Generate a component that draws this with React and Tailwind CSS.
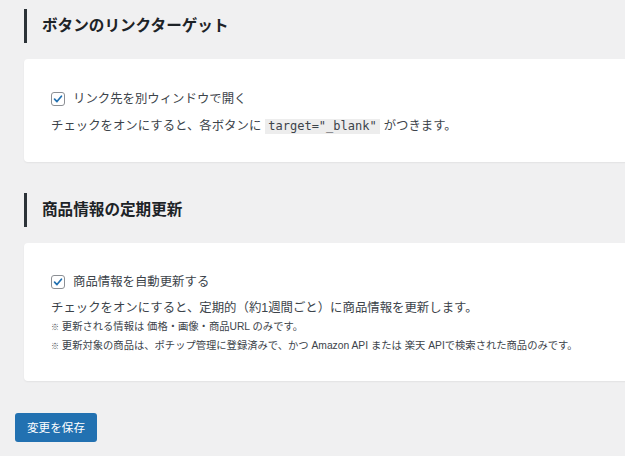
import React from 'react';

const jp = { fontFamily: '"Liberation Sans", "Noto Sans CJK JP", sans-serif' };

function Checkbox() {
  return (
    <span className="flex h-[14px] w-[14px] shrink-0 items-center justify-center rounded-[3px] border border-[#8c8f94] bg-white">
      <svg viewBox="0 0 14 14" className="h-[12px] w-[12px]">
        <path d="M3 7.2 L5.8 10 L11 3.8" fill="none" stroke="#2271b1" strokeWidth="2" strokeLinecap="round" strokeLinejoin="round" />
      </svg>
    </span>
  );
}

function SectionTitle({ children, className = '' }) {
  return (
    <div className={`ml-[24px] flex h-[34px] items-center border-l-[3px] border-[#2c3338] pl-[15px] ${className}`}>
      <h2 className="text-[15.6px] font-bold leading-none text-[#1d2327]">{children}</h2>
    </div>
  );
}

function Card({ children, className = '' }) {
  return (
    <div className={`ml-[24px] w-[700px] rounded-[4px] bg-white pl-[27px] shadow-[0_1px_2px_rgba(0,0,0,0.06)] ${className}`}>
      {children}
    </div>
  );
}

function CheckRow({ label }) {
  return (
    <label className="flex h-[14px] items-center gap-[8px]">
      <Checkbox />
      <span className="text-[12.4px] leading-none text-[#3c434a]">{label}</span>
    </label>
  );
}

export default function App() {
  return (
    <div className="h-[456px] w-[625px] overflow-hidden bg-[#f0f0f1]" style={jp}>
      <SectionTitle className="mt-[9px]">ボタンのリンクターゲット</SectionTitle>

      <Card className="mt-[16px] h-[103px] pt-[33px]">
        <CheckRow label="リンク先を別ウィンドウで開く" />
        <p className="mt-[12px] flex items-center text-[12.4px] leading-[16px] text-[#3c434a]">
          <span>チェックをオンにすると、各ボタンに</span>
          <code
            className="mx-[4px] bg-[#ededed] px-[3px] text-[12px] leading-[15px] text-[#3c434a]"
            style={{ fontFamily: '"DejaVu Sans Mono", monospace' }}
          >
            target="_blank"
          </code>
          <span>がつきます。</span>
        </p>
      </Card>

      <SectionTitle className="mt-[31px]">商品情報の定期更新</SectionTitle>

      <Card className="mt-[16px] h-[138px] pt-[32px]">
        <CheckRow label="商品情報を自動更新する" />
        <p className="mt-[11px] text-[12.4px] leading-[16px] text-[#3c434a]">
          チェックをオンにすると、定期的（約1週間ごと）に商品情報を更新します。
        </p>
        <p className="mt-[2px] text-[10.3px] leading-[18px] text-[#3c434a]">
          <span className="text-[8px]">※</span> 更新される情報は 価格・画像・商品URL のみです。
        </p>
        <p className="text-[10.3px] leading-[18px] text-[#3c434a]">
          <span className="text-[8px]">※</span> 更新対象の商品は、ポチップ管理に登録済みで、かつ Amazon API または 楽天 APIで検索された商品のみです。
        </p>
      </Card>

      <button className="ml-[15px] mt-[32px] flex h-[29px] w-[82px] items-center justify-center rounded-[3px] bg-[#2271b1] text-[11.6px] text-white">
        変更を保存
      </button>
    </div>
  );
}
